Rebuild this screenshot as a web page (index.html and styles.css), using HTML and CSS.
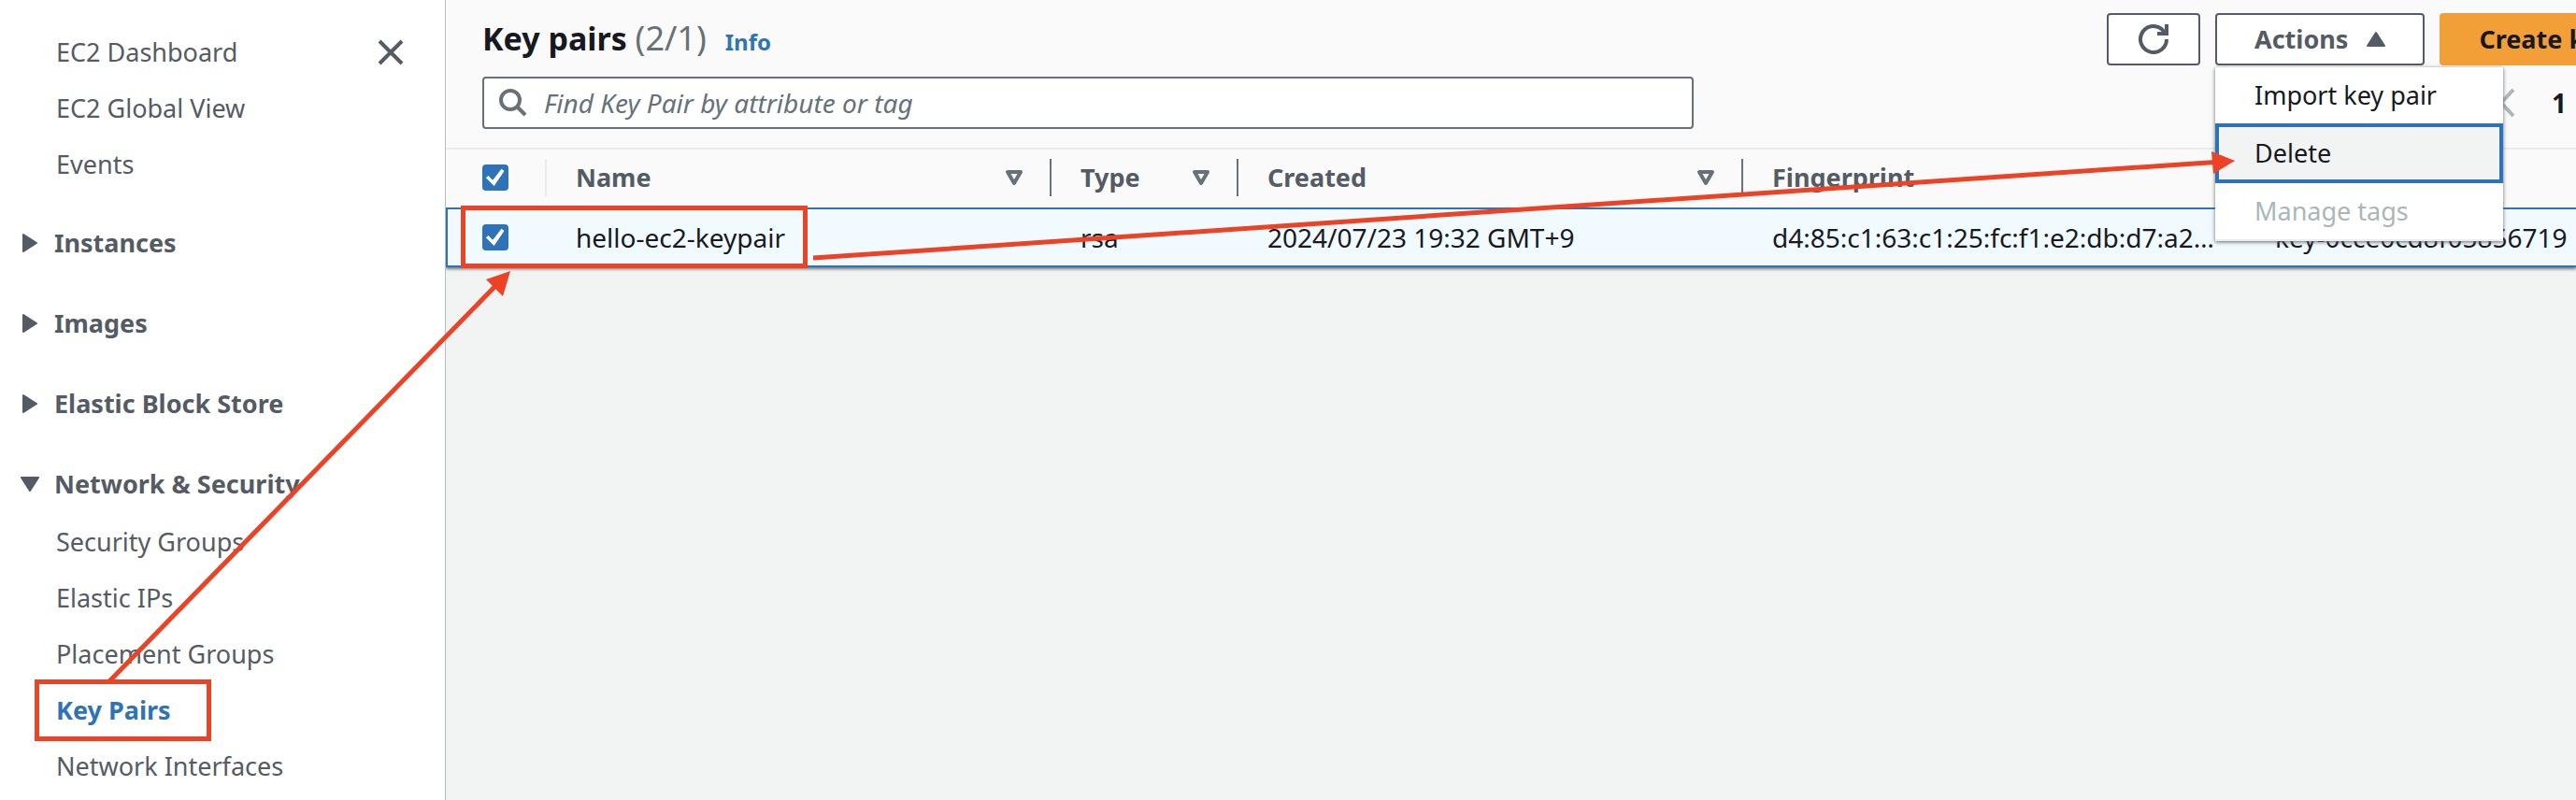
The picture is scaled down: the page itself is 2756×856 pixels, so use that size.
FILE: index.html
```html
<!DOCTYPE html>
<html lang="en">
<head>
<meta charset="utf-8">
<title>Key pairs</title>
<link rel="stylesheet" href="styles.css">
</head>
<body>
<div class="app">
  <nav class="sidebar">
    <button class="close" aria-label="Close navigation">
      <svg width="28" height="28" viewBox="0 0 28 28"><path d="M2 2 26 26M26 2 2 26" fill="none" stroke="currentColor" stroke-width="4"/></svg>
    </button>
    <ul class="links">
      <li><a href="#">EC2 Dashboard</a></li>
      <li><a href="#">EC2 Global View</a></li>
      <li><a href="#">Events</a></li>
    </ul>
    <button class="section"><svg class="caret" viewBox="0 0 20 20"><path d="M3 1 17 10 3 19Z"/></svg>Instances</button>
    <button class="section"><svg class="caret" viewBox="0 0 20 20"><path d="M3 1 17 10 3 19Z"/></svg>Images</button>
    <button class="section"><svg class="caret" viewBox="0 0 20 20"><path d="M3 1 17 10 3 19Z"/></svg>Elastic Block Store</button>
    <button class="section"><svg class="caret" viewBox="0 0 20 20"><path d="M1 3 19 3 10 17Z"/></svg>Network &amp; Security</button>
    <ul class="links">
      <li><a href="#">Security Groups</a></li>
      <li><a href="#">Elastic IPs</a></li>
      <li><a href="#">Placement Groups</a></li>
      <li><a href="#" class="current">Key Pairs</a></li>
      <li><a href="#">Network Interfaces</a></li>
    </ul>
  </nav>
  <main class="main">
    <section class="panel">
      <header class="head">
        <div class="title-row">
          <h1>Key pairs <span class="count">(2/1)</span></h1>
          <a href="#" class="info">Info</a>
          <div class="toolbar">
            <button class="btn refresh" aria-label="Refresh">
              <svg width="32" height="32" viewBox="0 0 32 32"><path d="M30 16a14 14 0 1 1-5-10.700L28 9M20 10H30V0" fill="none" stroke="currentColor" stroke-width="4"/></svg>
            </button>
            <div class="dropdown">
              <button class="btn">Actions <svg class="caret" viewBox="0 0 20 20"><path d="M1 17 19 17 10 3Z"/></svg></button>
              <div class="menu">
                <button class="item">Import key pair</button>
                <button class="item focused">Delete</button>
                <button class="item" disabled>Manage tags</button>
              </div>
            </div>
            <button class="btn primary">Create key pair</button>
          </div>
        </div>
        <div class="filter-row">
          <div class="search">
            <svg width="30" height="30" viewBox="0 0 30 30"><circle cx="12" cy="12" r="10" fill="none" stroke="currentColor" stroke-width="4"/><path d="M19 19 28 28" stroke="currentColor" stroke-width="4"/></svg>
            <input type="text" aria-label="Find Key Pair" placeholder="Find Key Pair by attribute or tag">
          </div>
          <div class="pager">
            <button aria-label="Previous page"><svg width="20" height="32" viewBox="0 0 20 32"><path d="M17 2 4 16 17 30" fill="none" stroke="currentColor" stroke-width="4"/></svg></button>
            <span class="page">1</span>
          </div>
        </div>
      </header>
      <table>
        <colgroup><col class="c-check"><col class="c-name"><col class="c-type"><col class="c-created"><col class="c-finger"><col></colgroup>
        <thead>
          <tr>
            <th><input type="checkbox" checked aria-label="Select all"></th>
            <th><div class="th">Name<svg class="sort" viewBox="0 0 20 20"><path d="M3 4H17L10 16Z"/></svg></div></th>
            <th><div class="th">Type<svg class="sort" viewBox="0 0 20 20"><path d="M3 4H17L10 16Z"/></svg></div></th>
            <th><div class="th">Created<svg class="sort" viewBox="0 0 20 20"><path d="M3 4H17L10 16Z"/></svg></div></th>
            <th><div class="th">Fingerprint</div></th>
            <th></th>
          </tr>
        </thead>
        <tbody>
          <tr>
            <td><input type="checkbox" checked aria-label="Select hello-ec2-keypair"></td>
            <td>hello-ec2-keypair</td>
            <td>rsa</td>
            <td>2024/07/23 19:32 GMT+9</td>
            <td>d4:85:c1:63:c1:25:fc:f1:e2:db:d7:a2…</td>
            <td>key-0cce0cd8f05856719</td>
          </tr>
        </tbody>
      </table>
    </section>
  </main>
  <svg class="marks" width="2400" height="856" viewBox="0 0 2400 856">
    <g fill="none" stroke="#ec4226" stroke-width="5">
      <rect x="39.500" y="729.500" width="184" height="61"/>
      <rect x="495.500" y="222.500" width="366" height="62"/>
      <path d="M116 730 532 304M870 276 2370 173.500"/>
    </g>
    <path d="M546 290 520 299 538 317ZM2391 172 2366 162 2368 186Z" fill="#ec4226"/>
  </svg>
</div>
</body>
</html>
```
FILE: styles.css
```css
* { box-sizing: border-box; }
body {
  margin: 0;
  font: 28px/40px "Noto Sans", sans-serif;
  color: #16191f;
  background: #f2f3f3;
}
button, input { font: inherit; color: inherit; }
button { margin: 0; border: 0; padding: 0; background: none; }
a { text-decoration: none; }
.app {
  position: relative;
  display: flex;
  min-height: 100vh;
  overflow: hidden;
}

.sidebar {
  position: relative;
  flex: 0 0 477px;
  padding-top: 26px;
  background: #fff;
  border-right: 1px solid #b8bfc2;
  color: #545b64;
  font-size: 27px;
}
.close { position: absolute; top: 42px; right: 44px; height: 28px; }
.close svg { display: block; }
.links { margin: 0; padding: 0 0 0 60px; list-style: none; }
.links li { height: 60px; padding: 10px 0; }
.links a { color: #545b64; }
.links .current { color: #2e73b8; font-weight: 700; }
.section {
  display: flex;
  align-items: center;
  gap: 16px;
  height: 40px;
  margin: 34px 0 46px;
  padding-left: 22px;
  font-weight: 700;
}
.section + .section { margin-top: 0; }
.section + .links { margin-top: -34px; }
.caret {
  width: 20px;
  height: 20px;
  fill: currentColor;
  stroke: currentColor;
  stroke-width: 2;
  stroke-linejoin: round;
}

.main { flex: 1; min-width: 0; }
.panel { background: #fafafa; box-shadow: 0 2px 3px #70777a; }
.head { padding: 14px 0 20px 39px; border-bottom: 2px solid #eaeded; }
.title-row { display: flex; align-items: baseline; height: 56px; }
h1 { margin: 0; font-size: 34px; line-height: 54px; }
.count { color: #687078; font-size: 36px; font-weight: 400; }
.info { margin-left: 20px; font-size: 24px; font-weight: 700; color: #2e73b8; }
.toolbar {
  flex: 0 0 502px;
  align-self: flex-start;
  display: flex;
  gap: 16px;
  min-width: 0;
  margin-left: auto;
}
.btn {
  display: flex;
  flex: none;
  align-items: center;
  justify-content: center;
  gap: 20px;
  height: 56px;
  padding: 0 40px;
  border: 2px solid #545b64;
  border-radius: 4px;
  background: #fff;
  color: #545b64;
  font-size: 27px;
  font-weight: 700;
  white-space: nowrap;
}
.refresh { width: 100px; padding: 0; }
.primary { background: #f29f38; border-color: #f29f38; color: #16191f; }
.dropdown { position: relative; flex: none; }
.menu {
  position: absolute;
  z-index: 1;
  top: 58px;
  left: 0;
  width: 308px;
  background: #fff;
  border-bottom: 2px solid #eaeded;
  box-shadow: 0 1px 4px #5c6468;
  font-size: 27px;
}
.item { display: block; width: 100%; height: 60px; padding: 0 42px; text-align: left; }
.item.focused {
  height: 64px;
  padding: 0 38px;
  border: 4px solid #2e73b8;
  background: #f2f3f3;
}
.item:disabled { color: #aab7b8; }

.filter-row { display: flex; justify-content: space-between; margin-top: 12px; }
.search {
  display: flex;
  flex: 0 1 1296px;
  align-items: center;
  gap: 18px;
  height: 56px;
  padding: 0 16px;
  border: 2px solid #687078;
  border-radius: 4px;
  background: #fff;
  color: #687078;
}
.search input { flex: 1; min-width: 0; padding: 0; border: 0; outline: 0; background: none; }
.search input::placeholder { color: #687078; opacity: 1; font-style: italic; }
.pager { display: flex; align-items: center; gap: 38px; padding-right: 10px; }
.pager button { height: 32px; color: #aab7b8; }
.pager svg { display: block; }
.page { font-weight: 700; }

table { width: 100%; border-collapse: separate; border-spacing: 0; table-layout: fixed; }
.c-check { width: 106px; }
.c-name { width: 540px; }
.c-type { width: 200px; }
.c-created { width: 540px; }
.c-finger { width: 538px; }
th, td { padding: 0 0 0 33px; text-align: left; white-space: nowrap; }
th { height: 62px; padding-bottom: 2px; color: #545b64; font-size: 27px; }
th:first-child { padding-left: 39px; }
td:first-child { padding-left: 37px; }
.th { display: flex; align-items: center; justify-content: space-between; padding-right: 28px; }
.sort { width: 20px; height: 20px; fill: none; stroke: #687078; stroke-width: 4; stroke-linejoin: round; }
th + th { background: linear-gradient(#687078, #687078) 0 10px / 2px 40px no-repeat; }
th:nth-child(2) { background-image: linear-gradient(#eaeded, #eaeded); }
td {
  height: 64px;
  border: solid #2e73b8;
  border-width: 2px 0;
  background: #f1faff;
}
td:first-child { border-left-width: 2px; }
input[type="checkbox"] {
  appearance: none;
  display: block;
  width: 28px;
  height: 28px;
  margin: 0;
  border-radius: 4px;
  background: #2e73b8;
}
input[type="checkbox"]::before {
  content: "";
  display: block;
  width: 28px;
  height: 28px;
  background: #fff;
  clip-path: polygon(14% 51%, 23% 43%, 40% 60%, 73% 17%, 84% 25%, 45% 82%);
}
.marks { position: absolute; z-index: 2; top: 0; left: 0; pointer-events: none; }
```
